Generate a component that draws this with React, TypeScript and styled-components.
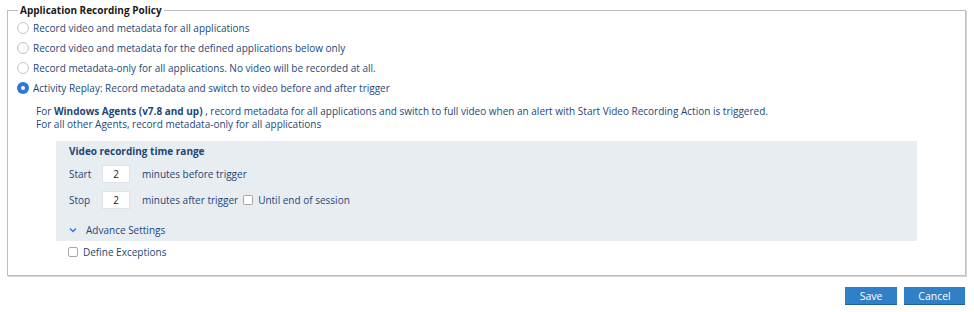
import React from 'react';
import styled, { createGlobalStyle } from 'styled-components';

const Global = createGlobalStyle`
	body {
		margin: 0;
		background: #fff;
		font-family: 'Open Sans', 'Liberation Sans', sans-serif;
		font-size: 10px;
		color: #1d4777;
	}
`;

const Page = styled.div`
	padding: 3px 8px 0 7px;
	width: 959px;
`;

const Fieldset = styled.fieldset`
	margin: 0;
	padding: 0 0 0 9px;
	border: 1px solid #bdbdbd;
	box-shadow: 1px 1px 0 #d6d6d6;
	height: 273px;
	box-sizing: border-box;
`;

const Legend = styled.legend`
	padding: 0 2px;
	margin-left: 1px;
	font-weight: 700;
	color: #1a1a1a;
	font-size: 10px;
	line-height: 14px;
`;

const RadioList = styled.div`
	display: flex;
	flex-direction: column;
	gap: 6px;
	margin-top: 4px;
`;

const RadioRow = styled.label`
	display: flex;
	align-items: center;
	gap: 4px;
	height: 14px;
	white-space: nowrap;
`;

const RadioDot = styled.span<{ $checked?: boolean }>`
	width: 12px;
	height: 12px;
	border-radius: 50%;
	box-sizing: border-box;
	flex: none;
	border: ${(p) => (p.$checked ? '0' : '1px solid #c4c4c4')};
	background: ${(p) => (p.$checked ? '#2c77e0' : '#fff')};
	display: flex;
	align-items: center;
	justify-content: center;
	&::after {
		content: '';
		display: ${(p) => (p.$checked ? 'block' : 'none')};
		width: 4px;
		height: 4px;
		border-radius: 50%;
		background: #fff;
	}
`;

const Note = styled.div`
	margin: 10px 0 0 19px;
	line-height: 13px;
	white-space: nowrap;
	b {
		font-weight: 700;
	}
`;

const Panel = styled.div`
	margin: 10px 48px 0 39px;
	background: #e8edf2;
	padding: 4px 0 0 13px;
	height: 100px;
	box-sizing: border-box;
`;

const PanelTitle = styled.div`
	font-weight: 700;
	line-height: 12px;
`;

const TimeRow = styled.div`
	display: flex;
	align-items: center;
	height: 18px;
	margin-top: 8px;
`;

const RowLabel = styled.span`
	width: 33px;
`;

const NumBox = styled.div`
	width: 28px;
	height: 18px;
	box-sizing: border-box;
	background: #fff;
	border: 1px solid #dfe3e8;
	display: flex;
	align-items: center;
	justify-content: center;
	color: #222;
	margin-right: 12px;
`;

const Box = styled.span`
	width: 10px;
	height: 10px;
	box-sizing: border-box;
	border: 1px solid #a9a9a9;
	border-radius: 2px;
	background: #fff;
	flex: none;
`;

const InlineCheck = styled.label`
	display: flex;
	align-items: center;
	gap: 5px;
	margin-left: 5px;
`;

const Advance = styled.div`
	display: flex;
	align-items: center;
	gap: 9px;
	height: 14px;
	margin-top: 14px;
`;

const Exceptions = styled.label`
	display: flex;
	align-items: center;
	gap: 5px;
	margin: 4px 0 0 51px;
	height: 14px;
`;

const Actions = styled.div`
	display: flex;
	justify-content: flex-end;
	gap: 7px;
	padding: 11px 1px 0 0;
`;

const Button = styled.button<{ $w: number }>`
	width: ${(p) => p.$w}px;
	height: 18px;
	border: 0;
	background: #2f80c7;
	color: #fff;
	font-family: inherit;
	font-size: 10.5px;
	padding: 0;
	border-bottom: 1px solid #1f5f9a;
`;

const Chevron = () => (
	<svg width="8" height="6" viewBox="0 0 8 6">
		<path d="M1 1.5 L4 4.5 L7 1.5" fill="none" stroke="#2c77e0" strokeWidth="1.4" />
	</svg>
);

const options = [
	'Record video and metadata for all applications',
	'Record video and metadata for the defined applications below only',
	'Record metadata-only for all applications. No video will be recorded at all.',
	'Activity Replay: Record metadata and switch to video before and after trigger',
];

export default function App() {
	return (
		<>
			<Global />
			<Page>
				<Fieldset>
					<Legend>Application Recording Policy</Legend>
					<RadioList>
						{options.map((o, i) => (
							<RadioRow key={o}>
								<RadioDot $checked={i === 3} />
								{o}
							</RadioRow>
						))}
					</RadioList>
					<Note>
						For <b>Windows Agents (v7.8 and up)</b> , record metadata for all applications and switch to full video when
						an alert with Start Video Recording Action is triggered.
						<br />
						For all other Agents, record metadata-only for all applications
					</Note>
					<Panel>
						<PanelTitle>Video recording time range</PanelTitle>
						<TimeRow>
							<RowLabel>Start</RowLabel>
							<NumBox>2</NumBox>
							minutes before trigger
						</TimeRow>
						<TimeRow>
							<RowLabel>Stop</RowLabel>
							<NumBox>2</NumBox>
							minutes after trigger
							<InlineCheck>
								<Box />
								Until end of session
							</InlineCheck>
						</TimeRow>
						<Advance>
							<Chevron />
							Advance Settings
						</Advance>
					</Panel>
					<Exceptions>
						<Box />
						Define Exceptions
					</Exceptions>
				</Fieldset>
				<Actions>
					<Button $w={52}>Save</Button>
					<Button $w={61}>Cancel</Button>
				</Actions>
			</Page>
		</>
	);
}
